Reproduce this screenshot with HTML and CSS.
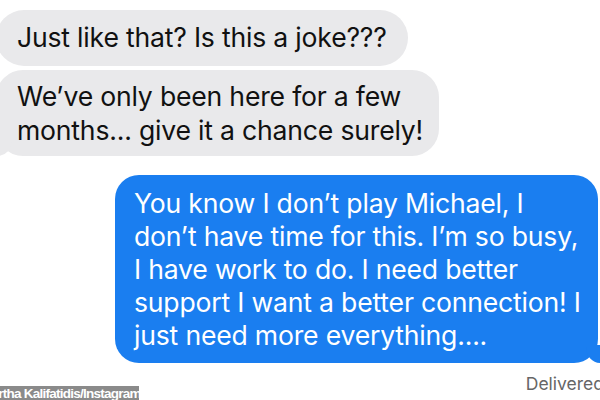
FILE: index.html
```html
<!DOCTYPE html>
<html>
<head>
<meta charset="utf-8">
<link rel="stylesheet" href="styles.css">
</head>
<body>
<div class="thread">
  <div class="bubble in first">Just like that? Is this a joke???</div>
  <div class="bubble in second">We’ve only been here for a few<br>months... give it a chance surely!<span class="tail tail-in"></span></div>
  <div class="bubble out">You know I don’t play Michael, I<br>don’t have time for this. I’m so busy,<br>I have work to do. I need better<br>support I want a better connection! I<br>just need more everything....<span class="tail tail-out"></span></div>
  <div class="footer">
    <div class="credit"><span class="credit-text">Martha Kalifatidis/Instagram</span></div>
    <div class="status">Delivered</div>
  </div>
</div>
</body>
</html>
```
FILE: styles.css
```css
* { box-sizing: border-box; }
html, body {
  margin: 0;
  padding: 0;
  background: #ffffff;
  width: 600px;
  height: 400px;
  overflow: hidden;
}
.thread {
  display: flex;
  flex-direction: column;
  padding-top: 10px;
  font-family: "Inter", "Liberation Sans", sans-serif;
}
.bubble {
  position: relative;
  font-size: 26.6px;
  letter-spacing: -0.2px;
  line-height: 34px;
  white-space: nowrap;
}
.in {
  align-self: flex-start;
  background: #e9e9eb;
  color: #111111;
  margin-left: -4px;
}
.first {
  height: 56px;
  padding: 10px 0 0 21px;
  border-radius: 28px;
  width: 412px;
}
.second {
  margin-top: 4px;
  height: 86px;
  padding: 9px 0 0 21px;
  border-radius: 27px;
  width: 443px;
}
.out {
  align-self: flex-end;
  margin-top: 19px;
  margin-right: 2px;
  width: 483px;
  height: 188px;
  padding: 12px 0 0 19px;
  border-radius: 24px;
  background: #1a7ef0;
  color: #ffffff;
  line-height: 33px;
}
.tail {
  position: absolute;
  bottom: 0;
  width: 16px;
  height: 18px;
}
.tail-in {
  left: 0;
  background: #e9e9eb;
  border-bottom-right-radius: 14px 16px;
}
.tail-out {
  right: -4px;
  background: #1a7ef0;
  border-bottom-left-radius: 14px 16px;
}
.footer {
  display: flex;
  justify-content: space-between;
  align-items: flex-start;
  margin-top: 12px;
}
.credit {
  margin-top: 11px;
  background: #8a8a8a;
  height: 15px;
  width: 139px;
  overflow: hidden;
  white-space: nowrap;
}
.credit-text {
  display: block;
  margin-left: -19px;
  font-family: "Liberation Sans", Arial, sans-serif;
  font-weight: bold;
  font-size: 13.5px;
  line-height: 15px;
  letter-spacing: -0.75px;
  color: #ffffff;
}
.status {
  font-size: 17.5px;
  color: #666666;
  margin-right: -4px;
  line-height: 18px;
  white-space: nowrap;
}
```
